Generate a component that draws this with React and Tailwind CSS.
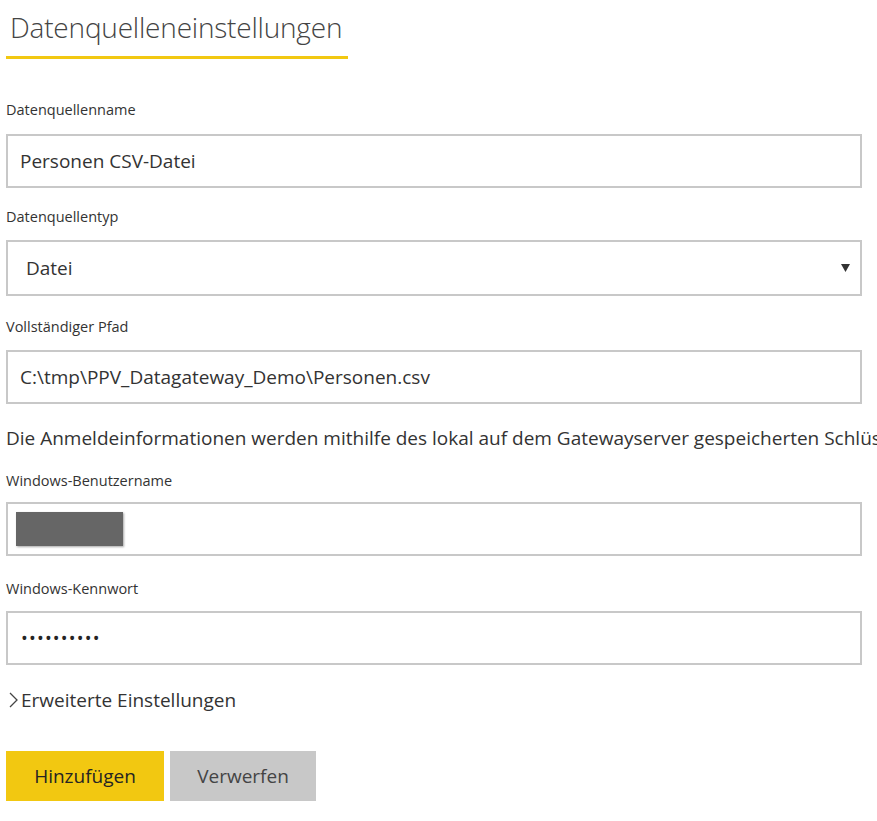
import React from "react";

const font = { fontFamily: '"Open Sans", "Noto Sans", "Liberation Sans", sans-serif' };

function Label({ children, className = "" }) {
  return (
    <div className={"text-[14.5px] leading-[20px] text-[#333333] " + className}>{children}</div>
  );
}

function Box({ children, className = "" }) {
  return (
    <div className={"w-[856px] border-2 border-[#c8c8c8] bg-white flex items-center " + className}>
      {children}
    </div>
  );
}

export default function App() {
  return (
    <div
      className="w-[877px] h-[821px] overflow-hidden bg-white text-[#333333] whitespace-nowrap"
      style={font}
    >
      <div className="px-[6px]">
        <div className="pt-[8px] pl-[4px] text-[28px] leading-[38px] font-light text-[#444444] tracking-[-0.2px]">
          Datenquelleneinstellungen
        </div>
        <div className="mt-[10px] h-[3px] w-[342px] bg-[#f2c811]" />

        <Label className="mt-[41px]">Datenquellenname</Label>
        <Box className="h-[54px] mt-[14px] pl-[12px]">
          <span className="text-[19px] text-[#333333]">Personen CSV-Datei</span>
        </Box>

        <Label className="mt-[19px]">Datenquellentyp</Label>
        <Box className="h-[56px] mt-[13px] pl-[18px] pr-[10px] justify-between">
          <span className="text-[19px] text-[#333333]">Datei</span>
          <svg width="9" height="8" viewBox="0 0 9 8">
            <polygon points="0,0 9,0 4.5,8" fill="#333333" />
          </svg>
        </Box>

        <Label className="mt-[21px]">Vollständiger Pfad</Label>
        <Box className="h-[54px] mt-[13px] pl-[12px]">
          <span className="text-[19px] text-[#333333]">C:\tmp\PPV_Datagateway_Demo\Personen.csv</span>
        </Box>

        <div className="mt-[21px] text-[19px] leading-[26px] text-[#333333]">
          Die Anmeldeinformationen werden mithilfe des lokal auf dem Gatewayserver gespeicherten Schlüssels verschlüsselt.
        </div>

        <Label className="mt-[20px]">Windows-Benutzername</Label>
        <Box className="h-[54px] mt-[11px] pl-[8px]">
          <div className="h-[34px] w-[107px] bg-[#666666] shadow-[1px_1px_2px_rgba(0,0,0,0.35)]" />
        </Box>

        <Label className="mt-[23px]">Windows-Kennwort</Label>
        <Box className="h-[54px] mt-[12px] pl-[13px]">
          <span className="text-[18px] tracking-[1.2px] text-[#252423]">••••••••••</span>
        </Box>

        <div className="mt-[22px] flex items-center text-[19px] leading-[26px] text-[#333333]">
          <svg width="12" height="18" viewBox="0 0 12 18" className="ml-[2px] mr-[1px]">
            <polyline points="2,2 9,9 2,16" fill="none" stroke="#444444" strokeWidth="1.3" />
          </svg>
          <span>Erweiterte Einstellungen</span>
        </div>

        <div className="mt-[38px] flex gap-[6px]">
          <button className="h-[50px] w-[158px] bg-[#f2c811] text-[19px] text-[#252423]">
            Hinzufügen
          </button>
          <button className="h-[50px] w-[146px] bg-[#c8c8c8] text-[19px] text-[#444444]">
            Verwerfen
          </button>
        </div>
      </div>
    </div>
  );
}
